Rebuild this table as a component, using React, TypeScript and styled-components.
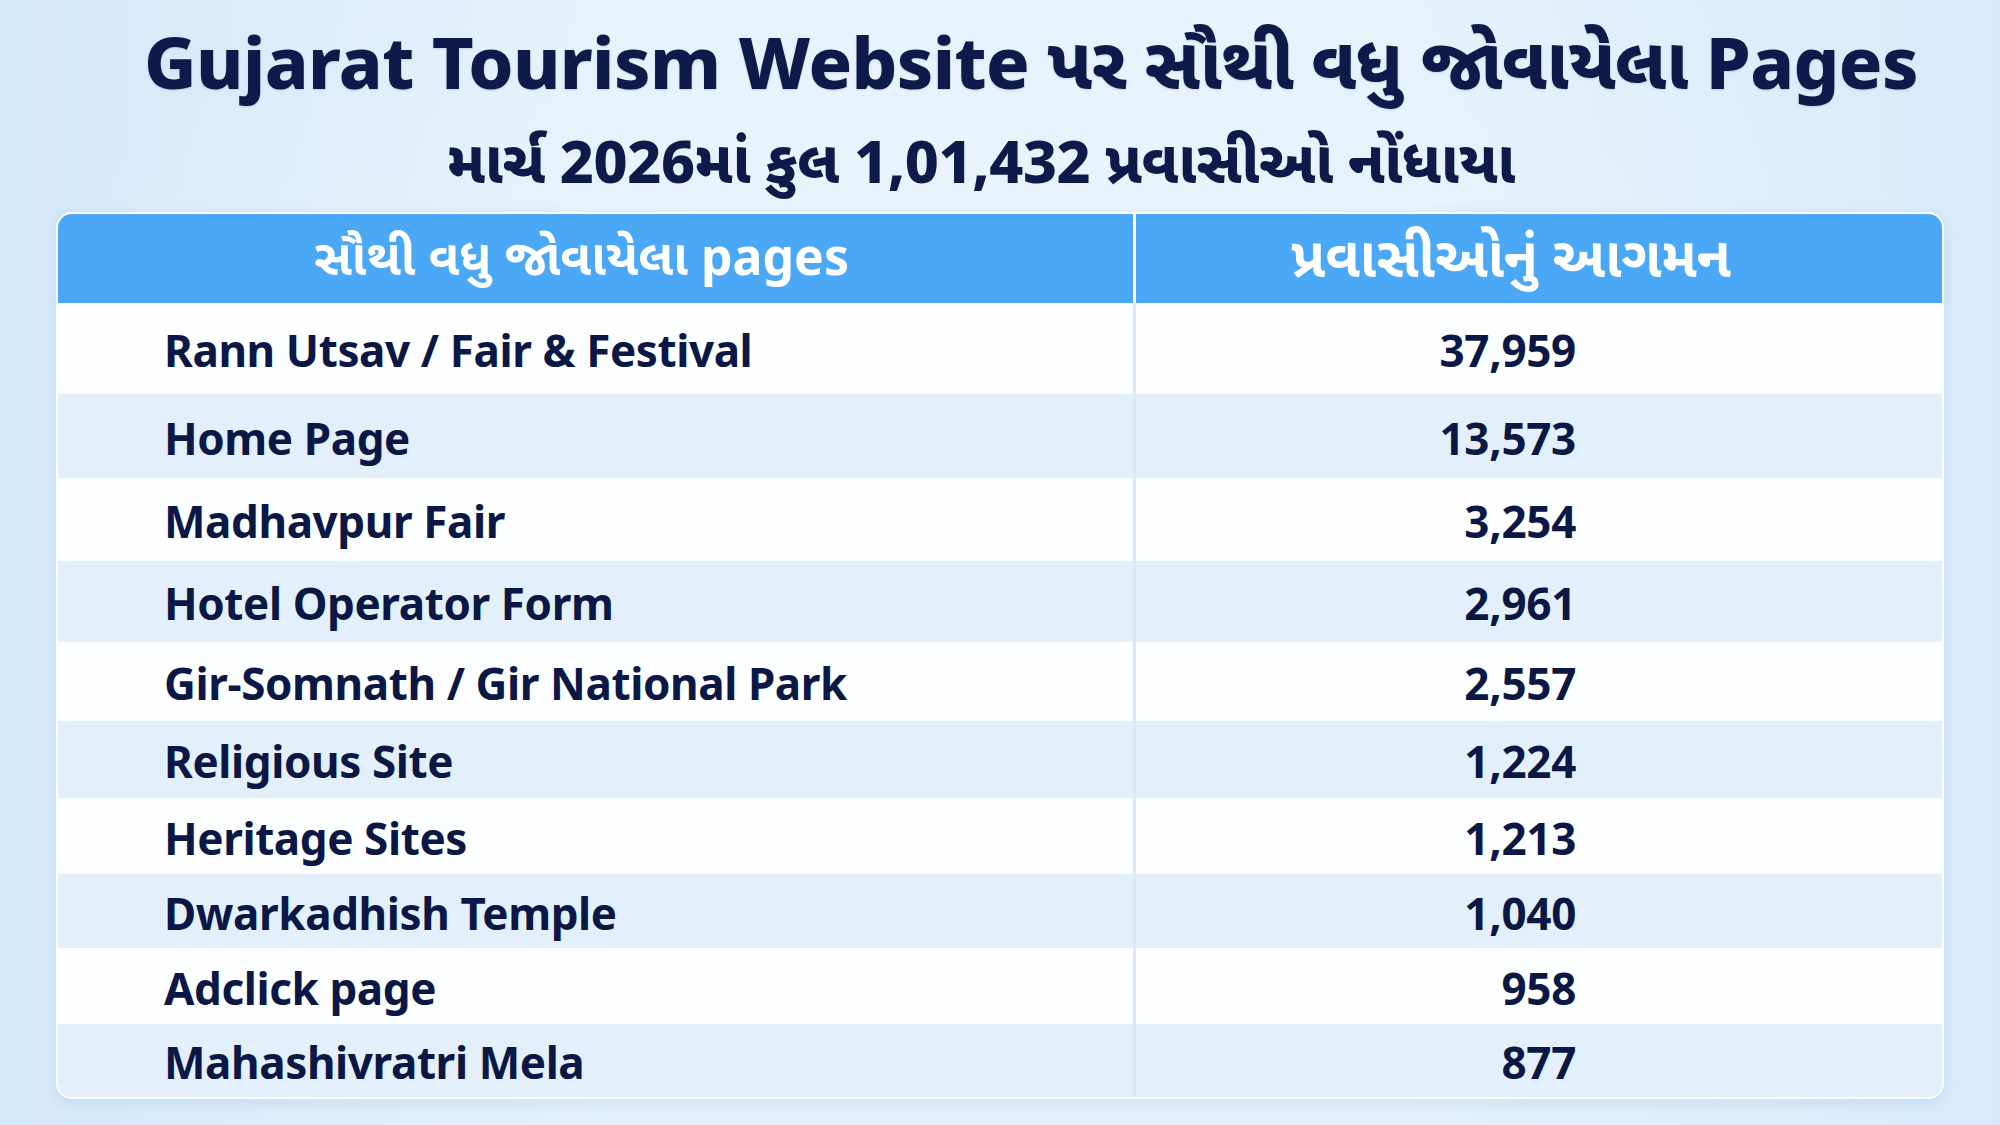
import React from "react";
import styled, { createGlobalStyle } from "styled-components";

const GlobalStyle = createGlobalStyle`
  html, body {
    margin: 0;
    padding: 0;
  }
  body {
    width: 2000px;
    height: 1125px;
    overflow: hidden;
    background: #dfeefb;
    font-family: "Noto Sans", "Noto Sans Gujarati", "Lohit Gujarati", "Shruti", sans-serif;
  }
`;

const Page = styled.main`
  width: 2000px;
  height: 1125px;
  box-sizing: border-box;
  display: flex;
  flex-direction: column;
  align-items: center;
  background:
    radial-gradient(ellipse at 50% 40%, rgba(236, 245, 253, 0.9) 0%, rgba(236, 245, 253, 0) 70%),
    linear-gradient(90deg, #d5e8f9 0%, #e4f1fc 30%, #e4f1fc 70%, #d8eafa 100%);
  color: #0d1a4a;
`;

const Title = styled.h1`
  margin: 0;
  padding: 14px 0 0 62px;
  height: 108px;
  box-sizing: border-box;
  font-size: 72px;
  font-weight: 800;
  line-height: 94px;
  letter-spacing: -0.6px;
  color: #0d1a4a;
  white-space: nowrap;
  text-shadow: 0 1px 2px rgba(13, 26, 74, 0.15);
`;

const Subtitle = styled.h2`
  margin: 0;
  padding: 0 38px 0 0;
  height: 104px;
  box-sizing: border-box;
  font-size: 59px;
  font-weight: 800;
  line-height: 104px;
  letter-spacing: -0.4px;
  color: #0d1a4a;
  white-space: nowrap;
`;

const Table = styled.section`
  width: 1888px;
  box-sizing: border-box;
  border: 2px solid rgba(255, 255, 255, 0.95);
  border-radius: 16px;
  overflow: hidden;
  box-shadow: 0 4px 14px rgba(90, 150, 210, 0.18);
  display: flex;
  flex-direction: column;
`;

const Row = styled.div<{ $h: number; $tone: "head" | "white" | "blue" }>`
  display: grid;
  grid-template-columns: 1075px 1fr;
  height: ${(p) => p.$h}px;
  background: ${(p) =>
    p.$tone === "head" ? "#4aa8f6" : p.$tone === "white" ? "#fdfeff" : "#e3f0fc"};
`;

const HeadCell = styled.div<{ $shift: number; $size: number }>`
  display: flex;
  align-items: center;
  justify-content: center;
  padding-left: ${(p) => (p.$shift < 0 ? 0 : p.$shift)}px;
  padding-right: ${(p) => (p.$shift < 0 ? -p.$shift : 0)}px;
  font-size: ${(p) => p.$size}px;
  font-weight: 700;
  color: #ffffff;
  white-space: nowrap;
  & + & {
    border-left: 3px solid #ffffff;
  }
`;

const NameCell = styled.div`
  display: flex;
  align-items: center;
  padding: 3px 0 0 106px;
  font-size: 44px;
  font-weight: 700;
  letter-spacing: -0.4px;
  color: #0b1845;
  white-space: nowrap;
`;

const ValueCell = styled.div`
  display: flex;
  align-items: center;
  justify-content: flex-end;
  padding: 3px 366px 0 0;
  border-left: 3px solid #d9e9f8;
  font-size: 44px;
  font-weight: 700;
  letter-spacing: -0.3px;
  color: #0b1845;
  white-space: nowrap;
`;

const rows: { name: string; value: string; h: number }[] = [
  { name: "Rann Utsav / Fair & Festival", value: "37,959", h: 91 },
  { name: "Home Page", value: "13,573", h: 84 },
  { name: "Madhavpur Fair", value: "3,254", h: 83 },
  { name: "Hotel Operator Form", value: "2,961", h: 81 },
  { name: "Gir-Somnath / Gir National Park", value: "2,557", h: 79 },
  { name: "Religious Site", value: "1,224", h: 77 },
  { name: "Heritage Sites", value: "1,213", h: 76 },
  { name: "Dwarkadhish Temple", value: "1,040", h: 74 },
  { name: "Adclick page", value: "958", h: 76 },
  { name: "Mahashivratri Mela", value: "877", h: 73 },
];

export default function App() {
  return (
    <>
      <GlobalStyle />
      <Page>
        <Title>Gujarat Tourism Website પર સૌથી વધુ જોવાયેલા Pages</Title>
        <Subtitle>માર્ચ 2026માં કુલ 1,01,432 પ્રવાસીઓ નોંધાયા</Subtitle>
        <Table>
          <Row $h={89} $tone="head">
            <HeadCell $shift={-28} $size={50}>સૌથી વધુ જોવાયેલા pages</HeadCell>
            <HeadCell $shift={-56} $size={56}>પ્રવાસીઓનું આગમન</HeadCell>
          </Row>
          {rows.map((r, i) => (
            <Row key={r.name} $h={r.h} $tone={i % 2 === 0 ? "white" : "blue"}>
              <NameCell>{r.name}</NameCell>
              <ValueCell>{r.value}</ValueCell>
            </Row>
          ))}
        </Table>
      </Page>
    </>
  );
}
